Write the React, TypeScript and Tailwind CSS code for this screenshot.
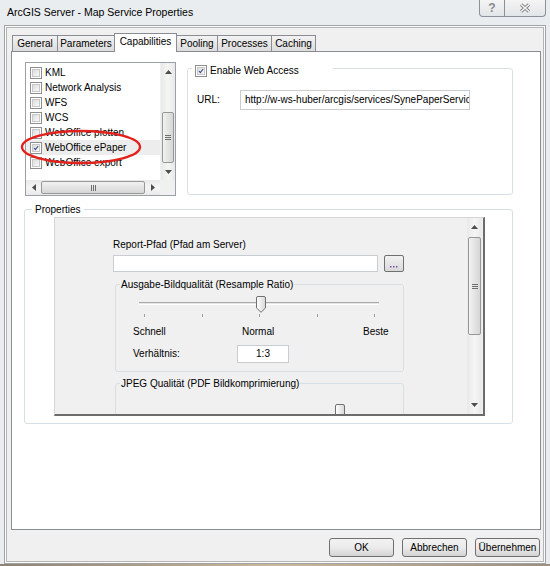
import React from 'react';

const Check = () => (
  <svg width="10" height="10" viewBox="0 0 10 10" className="block">
    <path d="M1.6 5 L4 7.8 L8.6 1.6" fill="none" stroke="#34508a" strokeWidth="1.8" />
  </svg>
);

const CheckBox = ({ checked = false }: { checked?: boolean }) => (
  <div className="w-[12px] h-[12px] border border-[#8e8f8f] bg-white p-px shrink-0">
    <div className="w-full h-full border border-[#c8c8c8] bg-gradient-to-br from-[#dcdcdc] to-[#fafafa] flex items-center justify-center">
      {checked && <Check />}
    </div>
  </div>
);

const Arrow = ({ dir }: { dir: 'up' | 'down' | 'left' | 'right' }) => {
  const pts = {
    up: '0,4 3.5,0 7,4',
    down: '0,0 3.5,4 7,0',
    left: '4,0 0,3.5 4,7',
    right: '0,0 4,3.5 0,7',
  }[dir];
  const vertical = dir === 'up' || dir === 'down';
  return (
    <svg width={vertical ? 7 : 4} height={vertical ? 4 : 7} className="block">
      <polygon points={pts} fill="#4d4d4d" />
    </svg>
  );
};

const VScroll = ({ arrow, thumbTop, thumbHeight }: { arrow: number; thumbTop: number; thumbHeight: number }) => (
  <div className="h-full flex flex-col bg-gradient-to-r from-[#e9e9e9] via-[#f5f5f5] to-[#e9e9e9] border-l border-[#f0f0f0]">
    <div className="flex items-center justify-center shrink-0" style={{ height: arrow }}>
      <Arrow dir="up" />
    </div>
    <div className="flex-1 px-px">
      <div
        className="rounded-[2px] border border-[#979797] bg-gradient-to-r from-[#f2f2f2] to-[#d6d6d6] flex flex-col items-center justify-center gap-px"
        style={{ marginTop: thumbTop, height: thumbHeight }}
      >
        <div className="w-[6px] h-px bg-[#6f6f6f]" />
        <div className="w-[6px] h-px bg-[#6f6f6f]" />
        <div className="w-[6px] h-px bg-[#6f6f6f]" />
      </div>
    </div>
    <div className="flex items-center justify-center shrink-0" style={{ height: arrow }}>
      <Arrow dir="down" />
    </div>
  </div>
);

const Button = ({ label, className = '' }: { label: string; className?: string }) => (
  <div
    className={`w-[65px] h-[19px] rounded-[3px] border border-[#707070] bg-gradient-to-b from-[#f2f2f2] via-[#ebebeb] to-[#d4d4d4] flex items-center justify-center text-[10px] ${className}`}
  >
    {label}
  </div>
);

const SliderThumb = () => (
  <svg width="10" height="17" viewBox="0 0 10 17" className="block">
    <defs>
      <linearGradient id="thumbg" x1="0" x2="1">
        <stop offset="0" stopColor="#ffffff" />
        <stop offset="1" stopColor="#d8d8d8" />
      </linearGradient>
    </defs>
    <path d="M0.5 2 Q0.5 0.5 2 0.5 H8 Q9.5 0.5 9.5 2 V12 L5 16.3 L0.5 12 Z" fill="url(#thumbg)" stroke="#707070" />
  </svg>
);

const items = ['KML', 'Network Analysis', 'WFS', 'WCS', 'WebOffice plotten', 'WebOffice ePaper', 'WebOffice export'];

const tabs = [
  { label: 'General', w: 'w-[46px]' },
  { label: 'Parameters', w: 'w-[58px]' },
  { label: 'Capabilities', w: 'w-[63px]', active: true },
  { label: 'Pooling', w: 'w-[42px]' },
  { label: 'Processes', w: 'w-[55px]' },
  { label: 'Caching', w: 'w-[45px]' },
];

export default function App() {
  return (
    <div className="w-[550px] h-[566px] bg-[#eaedf0] overflow-hidden relative font-['Liberation_Sans',Arial,sans-serif] text-[10px] leading-[12px] text-black">
      {/* title bar */}
      <div className="h-[25px] flex justify-between">
        <span className="pl-[7px] pt-[6px] text-[10.5px] leading-[13px]">ArcGIS Server - Map Service Properties</span>
        <div className="flex mr-[4px] h-[17px]">
          <div className="w-[26px] h-full border border-t-0 border-[#8c9097] rounded-bl-[4px] bg-gradient-to-b from-[#f4f4f4] to-[#e2e5e8] flex items-center justify-center text-[12px] font-bold text-[#8a8a8a]">
            ?
          </div>
          <div className="w-[41px] h-full border border-t-0 border-l-0 border-[#8c9097] rounded-br-[4px] bg-gradient-to-b from-[#f4f4f4] to-[#e2e5e8] flex items-center justify-center">
            <svg width="12" height="10" viewBox="0 0 12 10">
              <path d="M2 1.5 L10 8.5 M10 1.5 L2 8.5" stroke="#8a8a8a" strokeWidth="3.4" />
              <path d="M2 1.5 L10 8.5 M10 1.5 L2 8.5" stroke="#f4f4f4" strokeWidth="1.4" />
            </svg>
          </div>
        </div>
      </div>

      {/* window frame */}
      <div className="ml-[4px] w-[542px] h-[539px] border border-[#a3a3a3] p-px bg-[#fbfbfb]">
        <div className="h-full border border-[#b4b4b4] bg-[#f0f0f0] pl-[4px] pt-[5px] flex flex-col">
          {/* tabs */}
          <div className="flex items-end h-[18px] pl-[1px]">
            {tabs.map((t, i) =>
              t.active ? (
                <div
                  key={t.label}
                  className={`${t.w} h-[19px] -mb-px -ml-px relative z-10 bg-white border border-b-0 border-[#898c95] flex items-start justify-center pt-[2px]`}
                >
                  {t.label}
                </div>
              ) : (
                <div
                  key={t.label}
                  className={`${t.w} h-[16px] ${i === 0 ? '' : '-ml-px'} border border-b-0 border-[#898c95] bg-gradient-to-b from-[#f3f3f3] to-[#dcdcdc] flex items-center justify-center`}
                >
                  {t.label}
                </div>
              )
            )}
          </div>

          {/* tab panel */}
          <div className="w-[530px] h-[479px] border border-[#898c95] bg-white">
            <div className="flex items-start gap-[11px] pl-[13px] pt-[10px]">
              {/* list box */}
              <div className="w-[151px] h-[134px] border border-[#9aa0a8] flex flex-col">
                <div className="flex flex-1 min-h-0">
                  <div className="flex-1 pt-[2px] overflow-hidden">
                    {items.map((it) => (
                      <div
                        key={it}
                        className={`h-[15px] flex items-center pl-[4px] whitespace-nowrap ${it === 'WebOffice ePaper' ? 'bg-[#ededed]' : ''}`}
                      >
                        <CheckBox checked={it === 'WebOffice ePaper'} />
                        <span className="ml-[3px]">{it}</span>
                      </div>
                    ))}
                  </div>
                  <div className="w-[15px]">
                    <VScroll arrow={17} thumbTop={32} thumbHeight={51} />
                  </div>
                </div>
                <div className="h-[15px] flex shrink-0">
                  <div className="flex-1 flex items-center bg-gradient-to-b from-[#e9e9e9] via-[#f5f5f5] to-[#e9e9e9]">
                    <div className="w-[15px] flex justify-center">
                      <Arrow dir="left" />
                    </div>
                    <div className="flex-1 h-[13px] rounded-[2px] border border-[#979797] bg-gradient-to-b from-[#f2f2f2] to-[#d6d6d6] flex items-center justify-center gap-px">
                      <div className="w-px h-[6px] bg-[#6f6f6f]" />
                      <div className="w-px h-[6px] bg-[#6f6f6f]" />
                      <div className="w-px h-[6px] bg-[#6f6f6f]" />
                    </div>
                    <div className="w-[15px] flex justify-center">
                      <Arrow dir="right" />
                    </div>
                  </div>
                  <div className="w-[15px] bg-[#f0f0f0]" />
                </div>
              </div>

              {/* enable web access */}
              <div className="w-[326px] h-[127px] mt-[6px] border border-[#d5dfe5] rounded-[3px] relative">
                <div className="absolute left-[4px] -top-[5px] w-[141px] h-[13px] bg-white pl-[3px] flex items-center">
                  <CheckBox checked />
                  <span className="ml-[3px]">Enable Web Access</span>
                </div>
                <div className="mt-[21px] pl-[9px] flex items-center">
                  <span className="w-[43px]">URL:</span>
                  <div className="w-[230px] h-[20px] border border-[#c9cdd2] bg-white pl-[4px] flex items-center overflow-hidden whitespace-nowrap">
                    http://w-ws-huber/arcgis/services/SynePaperService
                  </div>
                </div>
              </div>
            </div>

            {/* properties */}
            <div className="ml-[12px] mt-[13px] w-[489px] h-[215px] border border-[#d5dfe5] rounded-[3px] relative">
              <div className="absolute left-[7px] -top-[7px] bg-white px-[3px] h-[13px] flex items-center">Properties</div>
              <div className="ml-[29px] mt-[7px] w-[431px] h-[199px] border-t border-l border-[#d6d6d6] border-r-2 border-b-2 border-r-[#6c6c6c] border-b-[#6c6c6c] bg-[#f0f0f0] flex">
                <div className="flex-1 overflow-hidden pl-[58px] pt-[21px]">
                  <div>Report-Pfad (Pfad am Server)</div>
                  <div className="mt-[4px] flex">
                    <div className="w-[265px] h-[17px] border border-[#c9cdd2] bg-white" />
                    <div className="ml-[6px] w-[20px] h-[17px] rounded-[2px] border border-[#707070] bg-gradient-to-b from-[#f2f2f2] to-[#d8d8d8] flex items-end justify-center pb-[3px]">
                      <svg width="8" height="2" className="block">
                        <rect x="0" y="0" width="1.5" height="1.5" fill="#7b4fa8" />
                        <rect x="3" y="0" width="1.5" height="1.5" fill="#7b4fa8" />
                        <rect x="6" y="0" width="1.5" height="1.5" fill="#7b4fa8" />
                      </svg>
                    </div>
                  </div>

                  {/* Ausgabe group */}
                  <div className="ml-[2px] mt-[12px] w-[289px] h-[88px] border border-[#d5dfe5] rounded-[3px] relative">
                    <div className="absolute left-[4px] -top-[7px] bg-[#f0f0f0] px-px h-[13px] flex items-center">
                      Ausgabe-Bildqualität (Resample Ratio)
                    </div>
                    <div className="ml-[23px] mt-[11px] w-[240px] h-[17px] relative">
                      <div className="absolute left-0 right-0 top-[6px] h-[3px] border-t border-[#a9a9a9] border-b border-b-white bg-[#e6e6e6]" />
                      <div className="absolute left-[117px] top-0">
                        <SliderThumb />
                      </div>
                    </div>
                    <div className="ml-[28px] mt-px w-[231px] flex justify-between">
                      {[0, 1, 2, 3, 4].map((n) => (
                        <div key={n} className="w-px h-[3px] bg-[#a0a0a0]" />
                      ))}
                    </div>
                    <div className="ml-[17px] mt-[9px] flex">
                      <span className="w-[109px]">Schnell</span>
                      <span className="w-[121px]">Normal</span>
                      <span>Beste</span>
                    </div>
                    <div className="ml-[17px] mt-[7px] flex items-center">
                      <span className="w-[104px]">Verhältnis:</span>
                      <div className="w-[52px] h-[18px] border border-[#c9cdd2] bg-white flex items-center justify-center">1:3</div>
                    </div>
                  </div>

                  {/* JPEG group */}
                  <div className="ml-[2px] mt-[11px] w-[289px] h-[80px] border border-[#d5dfe5] rounded-[3px] relative">
                    <div className="absolute left-[4px] -top-[7px] bg-[#f0f0f0] px-px h-[13px] flex items-center">
                      JPEG Qualität (PDF Bildkomprimierung)
                    </div>
                    <div className="ml-[219px] mt-[20px] w-[10px]">
                      <SliderThumb />
                    </div>
                  </div>
                </div>
                <div className="w-[16px] h-full mr-px">
                  <VScroll arrow={18} thumbTop={1} thumbHeight={98} />
                </div>
              </div>
            </div>
          </div>

          {/* buttons */}
          <div className="mt-[8px] flex justify-end gap-[8px] pr-[3px]">
            <Button label="OK" />
            <Button label="Abbrechen" />
            <Button label="Übernehmen" />
          </div>
        </div>
      </div>
      <div className="h-[2px] bg-gradient-to-r from-[#8a8478] via-[#c9b89a] to-[#9a8f80]" />

      {/* red annotation ellipse */}
      <svg className="absolute left-[19px] top-[128px]" width="124" height="38" viewBox="0 0 124 38">
        <ellipse cx="62" cy="19" rx="59" ry="16" fill="none" stroke="#e3211c" strokeWidth="2.4" />
      </svg>
    </div>
  );
}
